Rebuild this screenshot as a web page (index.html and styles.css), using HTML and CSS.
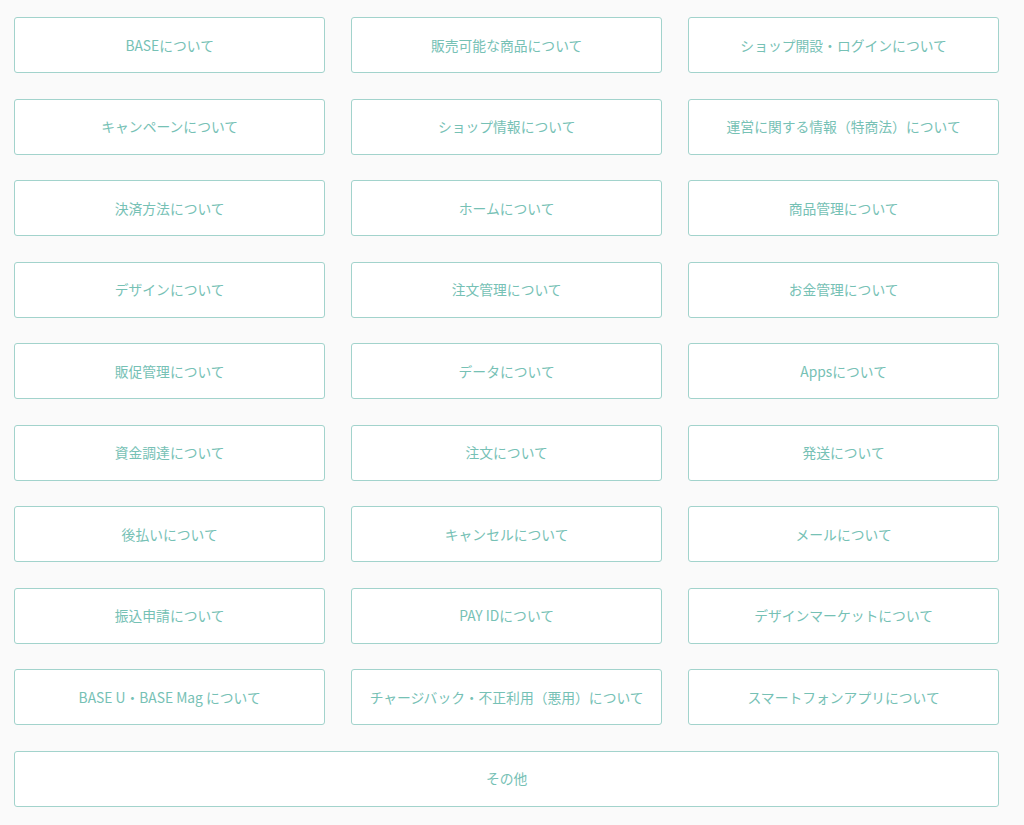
FILE: index.html
```html
<!DOCTYPE html>
<html lang="ja">
<head>
    <meta charset="UTF-8">
    <meta name="viewport" content="width=device-width, initial-scale=1.0">
    <title>よくある質問 カテゴリ</title>
    <link rel="stylesheet" href="styles.css">
</head>
<body>
    <div class="category-list">
        <a href="#" class="category-btn">BASEについて</a>
        <a href="#" class="category-btn">販売可能な商品について</a>
        <a href="#" class="category-btn">ショップ開設・ログインについて</a>
        <a href="#" class="category-btn">キャンペーンについて</a>
        <a href="#" class="category-btn">ショップ情報について</a>
        <a href="#" class="category-btn">運営に関する情報（特商法）について</a>
        <a href="#" class="category-btn">決済方法について</a>
        <a href="#" class="category-btn">ホームについて</a>
        <a href="#" class="category-btn">商品管理について</a>
        <a href="#" class="category-btn">デザインについて</a>
        <a href="#" class="category-btn">注文管理について</a>
        <a href="#" class="category-btn">お金管理について</a>
        <a href="#" class="category-btn">販促管理について</a>
        <a href="#" class="category-btn">データについて</a>
        <a href="#" class="category-btn">Appsについて</a>
        <a href="#" class="category-btn">資金調達について</a>
        <a href="#" class="category-btn">注文について</a>
        <a href="#" class="category-btn">発送について</a>
        <a href="#" class="category-btn">後払いについて</a>
        <a href="#" class="category-btn">キャンセルについて</a>
        <a href="#" class="category-btn">メールについて</a>
        <a href="#" class="category-btn">振込申請について</a>
        <a href="#" class="category-btn">PAY IDについて</a>
        <a href="#" class="category-btn">デザインマーケットについて</a>
        <a href="#" class="category-btn">BASE U・BASE Mag について</a>
        <a href="#" class="category-btn">チャージバック・不正利用（悪用）について</a>
        <a href="#" class="category-btn">スマートフォンアプリについて</a>
        <a href="#" class="category-btn category-btn-wide">その他</a>
    </div>
</body>
</html>
```

FILE: styles.css
```css
* {
    margin: 0;
    padding: 0;
    box-sizing: border-box;
}

body {
    font-family: "Noto Sans CJK JP", "Noto Sans", sans-serif;
    background-color: #fafafa;
    color: #76c1b5;
    font-size: 14px;
}

.category-list {
    display: grid;
    grid-template-columns: repeat(3, 1fr);
    grid-auto-rows: 56px;
    gap: 25.5px 25.6px;
    padding: 17px 24.7px 0 14px;
}

.category-btn {
    display: flex;
    align-items: center;
    justify-content: center;
    padding-bottom: 1px;
    background: #fff;
    border: 1px solid #a2d3cc;
    border-radius: 3px;
    color: #76c1b5;
    text-decoration: none;
    font-size: 13.8px;
    white-space: nowrap;
}

.category-btn-wide {
    grid-column: 1 / -1;
}
```
